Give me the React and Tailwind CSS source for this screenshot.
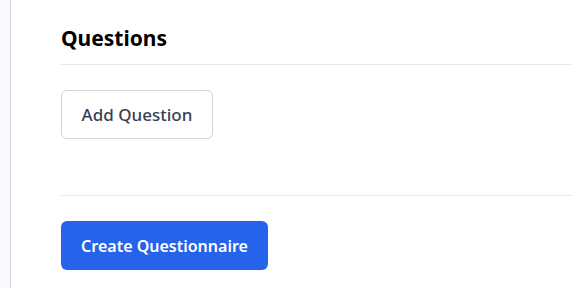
export default function App() {
  return (
    <div className="flex min-h-[288px] w-full bg-white" style={{ fontFamily: '"Noto Sans", "Open Sans", sans-serif' }}>
      <aside className="w-[11px] shrink-0 border-r border-[#d1d5db] bg-[#f9fafb]" />
      <main className="flex-1 pl-[50px] pt-[24px]">
        <div className="border-b border-[#e5e7eb] pb-[12px]">
          <h2 className="text-[21px] font-bold leading-7 text-black">Questions</h2>
        </div>
        <div className="pt-[25px] pb-[56px] border-b border-[#e5e7eb]">
          <button
            type="button"
            className="h-[49px] w-[152px] rounded-md border border-[#d1d5db] bg-white pt-px text-[17px] font-medium text-[#374151]"
          >
            Add Question
          </button>
        </div>
        <div className="pt-[25px]">
          <button
            type="button"
            className="h-[49px] w-[207px] rounded-md bg-[#2563eb] pt-px text-base font-semibold text-white"
          >
            Create Questionnaire
          </button>
        </div>
      </main>
    </div>
  )
}
